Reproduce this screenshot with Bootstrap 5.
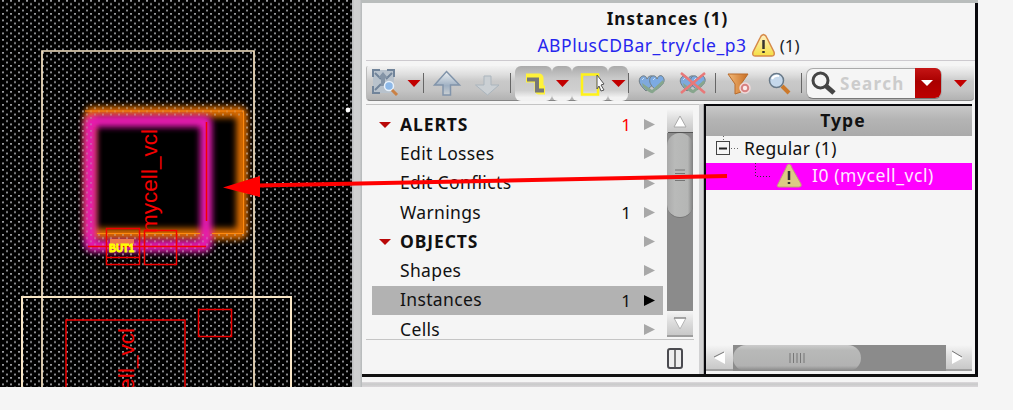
<!DOCTYPE html>
<html lang="en">
<head>
<meta charset="utf-8">
<title>Instances</title>
<link href="https://cdn.jsdelivr.net/npm/bootstrap@5.3.0/dist/css/bootstrap.min.css" rel="stylesheet">
<script src="https://cdn.jsdelivr.net/npm/bootstrap@5.3.0/dist/js/bootstrap.bundle.min.js"></script>
<style>
body{background:#f5f5f5;font-family:"Noto Sans","Open Sans",sans-serif;font-size:17px;line-height:1;color:#111;width:1013px;height:410px;overflow:hidden}
svg{display:block;flex:none}
.workspace{width:978px;height:387px}
.layout-view{width:352px;height:387px}
.splitter{width:10px;background:linear-gradient(90deg,#bfc0c2 0,#bfc0c2 1px,#d0d0d1 2px,#cecfd0 8px,#b9bcbd 9px)}
.navigator{width:616px;border-top:3px solid #b9bdbc}
.frame{height:374px;border-right:3px solid #08080c;border-bottom:3px solid #111}
.heading{height:58px;margin-left:4px;border-bottom:1px solid #cdcacf;padding-top:3px}
.heading div{height:26px;line-height:25px}
.t1{font-size:17px;letter-spacing:1.05px;padding-right:6px;color:#111}
.t2{font-size:17px;color:#2626ee;padding-right:4px}
#cellname{font-size:17.5px;letter-spacing:.55px}
.tools{height:35px;margin:5px 0 0 4px;width:608px;background:linear-gradient(#f2f2f2,#dedede 25%,#c9c9c9 45%,#c5c5c5 70%,#b2b2b2);border-bottom:1px solid #858585;border-left:1px solid #bbb;border-radius:2px 0 4px 4px}
.sep{width:1px;height:20px;background:#666}
.raised{height:35px;border-radius:6px;background:linear-gradient(#aaa,#c9c9c9 35%,#d0d0d0 70%,#f2f2f2 90%)}
.search{width:136px;height:31px;border:1px solid #aaa;border-bottom-color:#777;border-radius:7px;background:#f5f5f5}
.search b{font-size:17px;letter-spacing:1.3px;color:#ccc;width:77px}
.drop{width:26px;height:30px;background:linear-gradient(#c51515,#a90000 45%,#bd0000);border-radius:0 6px 6px 0}
.panes{height:270px;margin-top:3px}
.side{width:333px;margin-left:4px;border-top:1px solid #c4c4c4}
.rows{height:235px;border-bottom:1px solid #c5c5c5;width:328px;overflow:hidden}
.items{width:297px;padding-top:5px;margin-left:6px}
.item{width:291px;height:29.25px;padding:0 8px 0 7px}
.item.on{background:#b2b2b2}
.item .lbl{width:208px;font-size:17.5px;letter-spacing:.35px;margin-left:8px}
.item .lbl.fw-bold{font-size:17.5px;letter-spacing:.9px}
.item .num{width:24px;text-align:right;padding-right:1px}
.alerting{color:#f00}
.vbar{width:26px;margin:4px 1px 2px 0;background:#8b8b8b}
.cap{background:linear-gradient(#f5f5f5,#dcdcdc 45%,#c5c5c5);flex:none}
.vthumb{height:85px;border-radius:13px;background:linear-gradient(90deg,#aaa,#b9bab9 30%,#b5b6b5 80%,#808080);border-bottom:1px solid #777}
.foot{width:321px}
.gutter{width:5px;border-left:4px solid #d2d2d3;border-right:1px solid #aaa}
.tree{width:268px;border-left:2px solid #09090d;border-top:2px solid #09090d}
.th{height:30px;width:266px;background:linear-gradient(#c8c8c8,#b4b4b4 45%,#aaa);font-size:17.5px;letter-spacing:1.1px;padding-left:8px}
.group-row{height:27px}
.group-row span{font-size:17.5px;letter-spacing:.35px;position:relative;top:-1px}
.picked{height:27px;width:266px;background:#f0f;color:#ffe6ff}
.picked span{font-size:17.5px;letter-spacing:.58px;position:relative;top:-1px}
.hbar{width:266px;height:26px;background:#8b8b8b;margin-bottom:3px}
.hthumb{width:128px;border-radius:13px;background:linear-gradient(#ccc,#b8b9b8 20%,#b2b2b2 80%,#858585)}
.shade{height:5px;margin-top:5px;background:linear-gradient(#dedadd,#c9caca 40%,#d9d6d9)}
.callout{left:0;top:0;pointer-events:none}
</style>
</head>
<body class="position-relative">
<svg width="0" height="0" class="position-absolute"><defs>
<linearGradient id="gold" x2="0" y2="1"><stop stop-color="#fff0c5"/><stop offset="1" stop-color="#f5df42"/></linearGradient>
<linearGradient id="blu" x2="0" y2="1"><stop stop-color="#eef2f4"/><stop offset=".6" stop-color="#9fb0c3"/><stop offset="1" stop-color="#cbd0d3"/></linearGradient>
<linearGradient id="org" x2="1"><stop stop-color="#f2b978"/><stop offset="1" stop-color="#c86d22"/></linearGradient>
<symbol id="hearts" viewBox="0 0 28 22"><path d="M8 18C2 12 0 9 2 5C4 2 8 2 9 6C11 2 15 2 16 5C18 9 14 13 8 18Z" fill="#7fa9dc" stroke="#727d84"/><path d="M18 17C12 12 11 9 12 5C14 2 18 2 19 6C21 1 25 2 26 6C27 10 23 13 18 17Z" fill="#7caae2" stroke="#707d82"/><path d="M4 10L14 17L25 7L26 10L15 20Q12 21 5 14Z" fill="#87a68d"/><path d="M4 7l2-2M15 7l2-2" stroke="#c8dff8"/></symbol>
</defs></svg>
<div class="workspace d-flex">
  <svg class="layout-view" width="352" height="387" viewBox="0 0 352 387">
    <defs>
      <pattern id="dots" width="8" height="6.5" patternUnits="userSpaceOnUse"><rect x="2" y="0" width="2" height="1.7" fill="#999a9e"/><rect x="6" y="3.250" width="2" height="1.700" fill="#999a9e"/></pattern>
      <filter id="soft" x="-20%" y="-20%" width="140%" height="140%"><feGaussianBlur stdDeviation="3"/></filter>
    </defs>
    <rect width="352" height="387" fill="#000"/>
    <path d="M0 0H352V387H0ZM92 116V234H243V116Z" fill="url(#dots)" fill-rule="evenodd"/>
    <g fill="none" opacity=".9">
      <rect x="90" y="112" width="152" height="122" rx="2" stroke="#f87a00" stroke-width="11" filter="url(#soft)"/>
      <rect x="90" y="121" width="116" height="125" rx="2" stroke="#ff1fc4" stroke-width="12" filter="url(#soft)"/>
      <path d="M97 233H242" stroke="#ff8500" stroke-width="8" opacity=".8" filter="url(#soft)"/>
      <path d="M206 222V245" stroke="#ff1fc4" stroke-width="12" filter="url(#soft)"/>
    </g>
    <path d="M78 102H252V256H78ZM92 116V234H243V116Z" fill="url(#dots)" fill-rule="evenodd" opacity=".4"/>
    <path d="M97 233.500H200M212 233.500H243.500V111H85" fill="none" stroke="#ff8a10"/>
    <g fill="none" stroke="#f8e5c5"><path d="M42 387V51H254V387" stroke-width="1.7"/><path d="M22 387V297H291V387" stroke-width="2"/></g>
    <g fill="none" stroke="#f20000" stroke-width="1.5"><path d="M206.500 122V221M88 246.500H206"/><path d="M106.500 228.500H139.500V264.500H106.500ZM106 257.500H139M144.500 264.500V230.500H176.500V264.500Z"/><path d="M66 387V320H185V387"/><path d="M198.500 309.500H231.500V336.500H198.500Z"/></g>
    <g font-family="Liberation Sans, Arial, sans-serif" font-size="22.5" fill="#f40000">
      <text transform="translate(157 233) rotate(-90)" textLength="104" lengthAdjust="spacingAndGlyphs">mycell_vcl</text>
      <text transform="translate(134 432) rotate(-90)" textLength="104" lengthAdjust="spacingAndGlyphs">mycell_vcl</text>
    </g>
    <rect x="110" y="239" width="24" height="5" fill="#ed784e"/>
    <text x="109" y="252" textLength="25" lengthAdjust="spacingAndGlyphs" font-family="Liberation Sans, Arial, sans-serif" font-size="11" font-weight="bold" fill="#ff0" stroke="#ff0">BUT1</text>
    <circle cx="348" cy="110" r="2.400" fill="#fff"/>
  </svg>
  <div class="splitter"></div>
  <main class="navigator">
    <div class="frame">
      <header class="heading text-center">
        <div class="t1 fw-bold">Instances (1)</div>
        <div class="t2 d-flex justify-content-center align-items-center"><span id="cellname">ABPlusCDBar_try/cle_p3</span><svg class="ms-1 me-1" width="25" height="24" viewBox="0 0 25 24"><path d="M12.500 1.500Q15 2 16 5L23 19Q24 23 21 23H4Q1 23 2 19L9 5Q10 2 12.500 1.500Z" fill="url(#gold)" stroke="#d68a4a" stroke-width="1.500"/><path d="M12.500 7V16M12.500 18V20" stroke="#37332f" stroke-width="2.500"/></svg><span class="text-dark">(1)</span></div>
      </header>
      <div class="tools d-flex align-items-center">
        <svg width="56" height="35" viewBox="367 66 56 35"><path d="M373 70H394V93H373Z" fill="#b8c2cc"/><path d="M373 77V70H380M387 70H394V77M373 86V93H380M375 73L381 79M392 73L386 79M375 90L381 84" fill="none" stroke="#71849a" stroke-width="2"/><path d="M383 72L388 78H385V86H381V78H378Z" fill="#8494a6"/><circle cx="389" cy="86" r="4.500" fill="#8db8e7" stroke="#e8f2fc" stroke-width="1.500"/><path d="M392 90L397 95" stroke="#ca8145" stroke-width="3"/><path d="M407.500 80H420.500L414 87Z" fill="#c20000"/></svg>
        <div class="sep"></div>
        <svg width="86" height="35" viewBox="424 66 86 35"><path d="M446.500 71.500L459.500 85H450.500V95H443V85H434.500Z" fill="url(#blu)" stroke="#8194aa" stroke-width="1.500"/><path d="M484 76H491V85H499L487.500 95L475.500 85H484Z" fill="#cbd0d4" stroke="#abb5bd"/></svg>
        <div class="sep"></div>
        <div class="d-flex ms-1">
          <div class="raised"><svg width="37" height="35" viewBox="515 66 37 35"><path d="M526 78H539V90H545" fill="none" stroke="#fff23a" stroke-width="9" stroke-linejoin="round"/><path d="M527 79.500H537V90.500H544" fill="none" stroke="#777" stroke-width="4"/></svg></div>
          <div class="raised"><svg width="20" height="35" viewBox="552 66 20 35"><path d="M556 80H569L562.500 87Z" fill="#c20000"/></svg></div>
          <div class="raised"><svg width="36" height="35" viewBox="573 66 36 35"><path d="M583 74.500H599V94.500H583Z" fill="none" stroke="#fff21a" stroke-width="2.500"/><path d="M598 75L605 84L602 85L605 90L602 91L600 86L598 89Z" fill="#f8f8f8" stroke="#555"/></svg></div>
          <div class="raised"><svg width="20" height="35" viewBox="609 66 20 35"><path d="M612.500 80H626.500L619.500 87Z" fill="#c20000"/></svg></div>
        </div>
        <div class="sep"></div>
        <svg width="86" height="35" viewBox="629 66 86 35"><use href="#hearts" x="638" y="73" width="28" height="22"/><use href="#hearts" x="679" y="73" width="28" height="22"/><path d="M681 73L705 93M705 73L681 93" stroke="#e87878" stroke-width="2.500"/></svg>
        <div class="sep"></div>
        <svg width="85" height="35" viewBox="716 66 85 35"><path d="M728 74H748L741 84V92L735 94V84Z" fill="url(#org)" stroke="#b96b2b"/><circle cx="745" cy="88" r="5" fill="#d78282" stroke="#f0dada" stroke-width="1.500"/><circle cx="745" cy="88" r="2.200" fill="#fbeaea"/><path d="M782 86L789 93" stroke="#cc792b" stroke-width="4"/><circle cx="776.500" cy="80.500" r="7" fill="#c5d8eb" stroke="#687988" stroke-width="1.500"/><path d="M772 79Q774 75 779 76" stroke="#fff" fill="none" stroke-width="2"/></svg>
        <div class="sep"></div>
        <div class="search d-flex align-items-center ms-1"><svg width="33" height="30" viewBox="0 0 33 30"><circle cx="13.500" cy="12.500" r="7.500" fill="#f5f5f5" stroke="#454545" stroke-width="3"/><path d="M18.500 17.500L27 25" stroke="#454545" stroke-width="5"/></svg><b>Search</b><div class="drop"><svg width="26" height="30" viewBox="0 0 26 30"><path d="M6 12H18L12 18Z" fill="#fff"/></svg></div></div>
        <svg width="29" height="35" viewBox="942 66 29 35"><path d="M954 80H967L960.500 87Z" fill="#c20000"/></svg>
      </div>
      <div class="panes d-flex">
        <section class="side">
          <div class="rows d-flex"><div class="items" id="items"></div>
            <div class="vbar d-flex flex-column ms-auto"><svg class="cap" width="26" height="24" viewBox="0 0 26 24"><path d="M13 7L19 18H7Z" fill="#fff" stroke="#aaa"/><path d="M1 23.500H26" stroke="#555"/></svg><div class="vthumb"><svg width="26" height="84" viewBox="0 0 26 84"><path d="M8 37H18M8 40.500H18M8 44H18M8 47.500H18" stroke="#757575"/></svg></div><svg class="cap mt-auto" width="26" height="26" viewBox="0 0 26 26"><path d="M7 7H19L13 18Z" fill="#fff" stroke="#b5b5b5"/><path d="M7 7H19M0 25H26" stroke="#777"/></svg></div>
          </div>
          <div class="foot d-flex justify-content-end pt-2"><svg width="23" height="22" viewBox="664 347 23 22"><rect x="668" y="348" width="14" height="19" rx="2" fill="#eee" stroke="#4b4b50" stroke-width="2"/><path d="M675 349V366" stroke="#777" stroke-width="2"/></svg></div>
        </section>
        <div class="gutter"></div>
        <section class="tree d-flex flex-column">
          <div class="th d-flex align-items-center justify-content-center fw-bold">Type</div>
          <div class="group-row d-flex align-items-center"><svg width="38" height="27" viewBox="706 136 38 27"><rect x="716.500" y="141.500" width="13" height="13" fill="none" stroke="#444"/><path d="M719 148.500H727" stroke="#222" stroke-width="2"/><path d="M731 148.500H740M723.500 136V141" stroke="#666" stroke-dasharray="1 2"/></svg><span>Regular (1)</span></div>
          <div class="picked d-flex align-items-center"><svg width="106" height="27" viewBox="706 163 106 27"><path d="M755.500 163V176.500H770" fill="none" stroke="#333" stroke-dasharray="1 2"/><path d="M789 164Q791 164 792 168L801 184Q802 187 799 187H779Q776 187 778 184L786 168Q787 164 789 164Z" fill="#dcc985" stroke="#c09c79"/><path d="M789 171V180M789 182V184" stroke="#333" stroke-width="2.500"/></svg><span>I0 (mycell_vcl)</span></div>
          <div class="hbar d-flex mt-auto"><svg class="cap" width="27" height="26" viewBox="0 0 27 26"><path d="M19 7V19L8 13Z" fill="#fff"/><path d="M18 7L8 12M0 25H27" stroke="#777"/></svg><div class="hthumb d-flex align-items-center justify-content-center"><svg width="18" height="10" viewBox="0 0 18 10"><path d="M2 0V10M5.500 0V10M9 0V10M12.500 0V10M16 0V10" stroke="#777"/></svg></div><svg class="cap ms-auto" width="26" height="26" viewBox="0 0 26 26"><path d="M6 7V19L17 13Z" fill="#fff"/><path d="M6 6L16 12M0 25H26" stroke="#777"/></svg></div>
        </section>
      </div>
    </div>
    <div class="shade"></div>
  </main>
</div>
<svg class="callout position-absolute" width="1013" height="410" viewBox="0 0 1013 410"><path d="M258 185.500L727 176" stroke="#f00" stroke-width="4"/><path d="M223 187.500L260 176V197Z" fill="#f00"/></svg>
<script>
const entries=[["ALERTS","1",1],["Edit Losses",""],["Edit Conflicts",""],["Warnings","1"],["OBJECTS","",1],["Shapes",""],["Instances","1"],["Cells",""]];
document.getElementById("items").innerHTML=entries.map(([name,count,head])=>{
 const on=name==="Instances";
 return `<div class="item d-flex align-items-center ${on?"on":""}"><svg width="13" height="10" viewBox="0 0 13 10">${head?'<path d="M0 2H12L6 8Z" fill="#b90808"/>':""}</svg><span class="lbl ${head?"fw-bold":""}">${name}</span><span class="num ${name==="ALERTS"?"alerting":""}">${count}</span><svg class="ms-auto" width="12" height="13" viewBox="0 0 12 13"><path d="M1 1L12 6.500L1 12Z" fill="${on?"#000":"#a8a8a8"}"/></svg></div>`}).join("");
</script>
</body>
</html>
